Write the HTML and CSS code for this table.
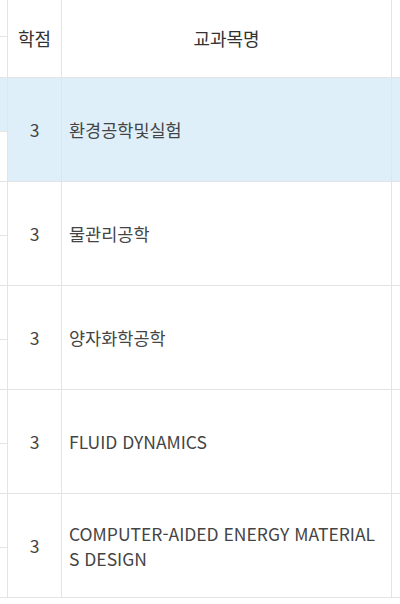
FILE: index.html
```html
<!DOCTYPE html>
<html lang="ko">
<head>
<meta charset="utf-8">
<link rel="stylesheet" href="styles.css">
</head>
<body>
<div class="grid">
  <div class="cell side side-head"><div class="side-top head-top"></div><div class="side-bottom"></div></div>
  <div class="cell head c">학점</div>
  <div class="cell head c">교과목명</div>
  <div class="cell head"></div>

  <div class="cell side sel"><div class="side-top"></div><div class="side-bottom white"></div></div>
  <div class="cell c sel">3</div>
  <div class="cell name sel">환경공학및실험</div>
  <div class="cell sel"></div>

  <div class="cell side"><div class="side-top"></div><div class="side-bottom"></div></div>
  <div class="cell c">3</div>
  <div class="cell name">물관리공학</div>
  <div class="cell"></div>

  <div class="cell side"><div class="side-top"></div><div class="side-bottom"></div></div>
  <div class="cell c">3</div>
  <div class="cell name">양자화학공학</div>
  <div class="cell"></div>

  <div class="cell side"><div class="side-top"></div><div class="side-bottom"></div></div>
  <div class="cell c">3</div>
  <div class="cell name">FLUID DYNAMICS</div>
  <div class="cell"></div>

  <div class="cell side"><div class="side-top"></div><div class="side-bottom"></div></div>
  <div class="cell c">3</div>
  <div class="cell name">COMPUTER-AIDED ENERGY MATERIALS DESIGN</div>
  <div class="cell"></div>
</div>
</body>
</html>
```

FILE: styles.css
```css
html, body {
  margin: 0;
  padding: 0;
  background: #fff;
  overflow: hidden;
}
body {
  width: 400px;
  height: 604px;
  font-family: "Noto Sans CJK KR", "Noto Sans", sans-serif;
  font-size: 17.5px;
  color: #444;
}
.grid {
  display: grid;
  grid-template-columns: 8px 54px 330px 8px;
  grid-template-rows: 78px repeat(4, 104px) 110px;
  width: 400px;
  height: 604px;
  overflow: hidden;
}
.cell {
  box-sizing: border-box;
  border-right: 1px solid #e4e4e4;
  border-bottom: 1px solid #e4e4e4;
  display: flex;
  align-items: center;
  line-height: 25px;
}
.grid > .cell:nth-child(4n) {
  border-right: none;
}
.grid > .cell:nth-last-child(-n+4) {
  height: 104px;
  align-self: start;
}
.head {
  color: #333;
  font-size: 18px;
}
.c {
  justify-content: center;
}
.name {
  padding: 0 8px 0 7px;
  word-break: break-all;
}
.sel {
  background: #dfeffa;
}
.side {
  flex-direction: column;
  align-items: stretch;
}
.side-top {
  box-sizing: border-box;
  height: 54px;
  border-bottom: 1px solid #e4e4e4;
  flex: none;
}
.head-top {
  height: 37px;
}
.side-bottom {
  flex: 1;
}
.side-bottom.white {
  background: #fff;
}
```
